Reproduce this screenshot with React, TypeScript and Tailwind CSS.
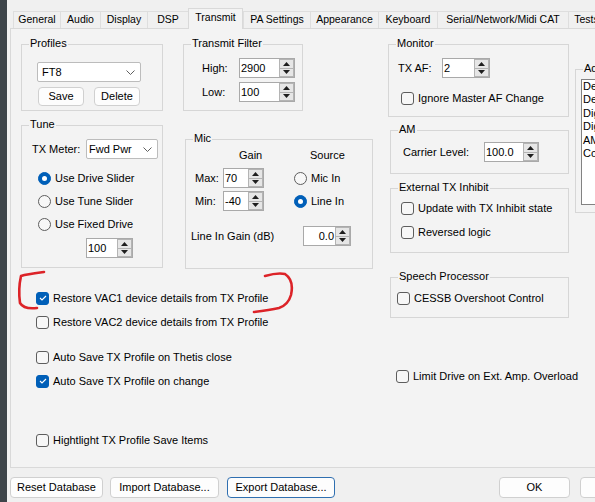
import React from 'react';

type Kids = { children?: React.ReactNode; className?: string };

const TABS: Array<{ label: string; w: string; active?: boolean }> = [
  { label: 'General', w: 'w-[47px]' },
  { label: 'Audio', w: 'w-[40px]' },
  { label: 'Display', w: 'w-[47px]' },
  { label: 'DSP', w: 'w-[41px]' },
  { label: 'Transmit', w: 'w-[55px]', active: true },
  { label: 'PA Settings', w: 'w-[67px]' },
  { label: 'Appearance', w: 'w-[68px]' },
  { label: 'Keyboard', w: 'w-[59px]' },
  { label: 'Serial/Network/Midi CAT', w: 'w-[131px]' },
  { label: 'Tests', w: 'w-[36px]' },
];

const PROFILES = ['Default', 'Default DX', 'Digi 1K@1500', 'Digi 1K@2210', 'AM', 'Conventional'];

function Arrow({ up }: { up?: boolean }) {
  return (
    <svg width="7" height="4" viewBox="0 0 7 4">
      <path d={up ? 'M0 4L3.5 0L7 4Z' : 'M0 0L3.5 4L7 0Z'} fill="#1e1e1e" />
    </svg>
  );
}

function Spin({ value, className = '', right }: { value: string; className?: string; right?: boolean }) {
  return (
    <div className={`flex h-[20px] shrink-0 border border-[#a9a9a9] bg-white ${className}`}>
      <div className={`flex-1 leading-[18px] ${right ? 'pr-[1px] text-right' : 'pl-[1px]'}`}>{value}</div>
      <div className="flex w-[15px] flex-col">
        <div className="flex flex-1 items-center justify-center border border-[#b4b4b4] bg-[#e6e6e6]">
          <Arrow up />
        </div>
        <div className="flex flex-1 items-center justify-center border border-t-0 border-[#b4b4b4] bg-[#e6e6e6]">
          <Arrow />
        </div>
      </div>
    </div>
  );
}

function Combo({ value, className = '' }: { value: string; className?: string }) {
  return (
    <div className={`flex h-[20px] shrink-0 items-center justify-between rounded-[2px] border border-[#bcbcbc] bg-white pr-[5px] ${className}`}>
      <span>{value}</span>
      <svg width="9" height="5" viewBox="0 0 9 5">
        <path d="M0.5 0.5L4.5 4.5L8.5 0.5" fill="none" stroke="#5f5f5f" strokeWidth="1" />
      </svg>
    </div>
  );
}

function Btn({ label, className = '' }: { label: string; className?: string }) {
  return (
    <div className={`flex shrink-0 items-center justify-center rounded-[4px] border bg-[#fdfdfd] ${className}`}>
      {label}
    </div>
  );
}

function Check({ label, checked }: { label: string; checked?: boolean }) {
  return (
    <div className="flex h-[16px] items-center gap-[4px]">
      <span
        className={`flex h-[13px] w-[13px] shrink-0 items-center justify-center rounded-[3px] border ${
          checked ? 'border-[#005fb8] bg-[#005fb8]' : 'border-[#5d5d5d] bg-[#f7f7f7]'
        }`}
      >
        {checked && (
          <svg width="8" height="6" viewBox="0 0 8 6">
            <path d="M1 3L3 5L7 1" fill="none" stroke="#fff" strokeWidth="1.1" />
          </svg>
        )}
      </span>
      <span className="whitespace-nowrap">{label}</span>
    </div>
  );
}

function Radio({ label, checked }: { label: string; checked?: boolean }) {
  return (
    <div className="flex h-[16px] items-center gap-[4px]">
      <span
        className={`flex h-[13px] w-[13px] shrink-0 items-center justify-center rounded-full border ${
          checked ? 'border-[#005fb8] bg-[#005fb8]' : 'border-[#5d5d5d] bg-[#f7f7f7]'
        }`}
      >
        {checked && <span className="h-[5px] w-[5px] rounded-full bg-white" />}
      </span>
      <span className="whitespace-nowrap">{label}</span>
    </div>
  );
}

function Group({ title, className = '', children }: Kids & { title: string }) {
  return (
    <div className={`relative shrink-0 border border-[#d6d6d6] ${className}`}>
      <span className="absolute -top-[8px] left-[7px] whitespace-nowrap bg-[#f3f3f3] px-[1px] leading-[13px]">
        {title}
      </span>
      {children}
    </div>
  );
}

function Annotation() {
  return (
    <svg className="pointer-events-none absolute left-0 top-0" width="595" height="502" viewBox="0 0 595 502">
      <g fill="none" stroke="#dc2328" strokeWidth="2.6" strokeLinecap="round" strokeLinejoin="round">
        <path d="M44 272C36 273 27 274 21 276C19 285 19 296 20 303C23 308 29 309 37 308" />
        <path d="M265 276C272 274 280 273 285 274C291 278 293 286 291 295C289 302 285 306 279 308C270 310 262 311 254 312" />
      </g>
    </svg>
  );
}

export default function App() {
  return (
    <div className="relative flex h-[502px] w-[595px] overflow-hidden bg-[#f0f0f0] font-['Liberation_Sans',Arial,sans-serif] text-[11px] text-black">
      {/* window edge behind the dialog */}
      <div className="h-full w-[7px] shrink-0 bg-[#3d4449]" />

      <div className="flex flex-col">
        {/* tab strip */}
        <div className="ml-[6px] mt-[8px] flex h-[20px] items-end text-[10.5px]">
          {TABS.map(t =>
            t.active ? (
              <div
                key={t.label}
                className={`relative z-10 -mb-px flex h-[21px] shrink-0 items-center justify-center border-x border-t border-[#d9d9d9] bg-[#f3f3f3] pb-[3px] ${t.w}`}
              >
                {t.label}
              </div>
            ) : (
              <div
                key={t.label}
                className={`flex h-[17px] shrink-0 items-center justify-center border-l border-t border-[#dedede] bg-[#f0f0f0] ${t.w}`}
              >
                {t.label}
              </div>
            ),
          )}
        </div>

        {/* tab page */}
        <div className="ml-[3px] flex h-[440px] w-[600px] items-start border-y border-l border-[#d9d9d9] bg-[#f3f3f3]">
          {/* left section */}
          <div className="ml-[10px] flex w-[352px] shrink-0 flex-col">
            <div className="flex items-start">
              <div className="mt-[15px] flex w-[142px] shrink-0 flex-col">
                <Group title="Profiles" className="h-[67px] w-[142px]">
                  <Combo value="FT8" className="ml-[15px] mt-[17px] w-[104px] pl-[4px]" />
                  <div className="ml-[16px] mt-[5px] flex gap-[10px]">
                    <Btn label="Save" className="h-[19px] w-[46px] border-[#d0d0d0]" />
                    <Btn label="Delete" className="h-[19px] w-[46px] border-[#d0d0d0]" />
                  </div>
                </Group>

                <Group title="Tune" className="mt-[14px] h-[143px] w-[142px]">
                  <div className="ml-[10px] mt-[13px] flex items-center">
                    <span className="w-[54px] shrink-0">TX Meter:</span>
                    <Combo value="Fwd Pwr" className="w-[72px] pl-[2px]" />
                  </div>
                  <div className="ml-[16px] mt-[11px] flex flex-col gap-[7px]">
                    <Radio label="Use Drive Slider" checked />
                    <Radio label="Use Tune Slider" />
                    <Radio label="Use Fixed Drive" />
                  </div>
                  <Spin value="100" className="ml-[64px] mt-[6px] w-[47px]" />
                </Group>
              </div>

              <div className="ml-[20px] mt-[15px] flex w-[190px] shrink-0 flex-col">
                <Group title="Transmit Filter" className="h-[67px] w-[120px]">
                  <div className="ml-[18px] mt-[13px] flex items-center">
                    <span className="w-[37px] shrink-0">High:</span>
                    <Spin value="2900" className="w-[56px]" />
                  </div>
                  <div className="ml-[18px] mt-[4px] flex items-center">
                    <span className="w-[37px] shrink-0">Low:</span>
                    <Spin value="100" className="w-[56px]" />
                  </div>
                </Group>

                <Group title="Mic" className="ml-[2px] mt-[28px] h-[130px] w-[188px]">
                  <div className="ml-[53px] mt-[9px] flex h-[13px] items-center">
                    <span className="w-[71px] shrink-0">Gain</span>
                    <span>Source</span>
                  </div>
                  <div className="ml-[9px] mt-[6px] flex items-center">
                    <span className="w-[28px] shrink-0">Max:</span>
                    <Spin value="70" className="w-[41px]" />
                    <div className="ml-[30px]">
                      <Radio label="Mic In" />
                    </div>
                  </div>
                  <div className="ml-[9px] mt-[3px] flex items-center">
                    <span className="w-[28px] shrink-0">Min:</span>
                    <Spin value="-40" className="w-[41px]" />
                    <div className="ml-[30px]">
                      <Radio label="Line In" checked />
                    </div>
                  </div>
                  <div className="ml-[5px] mt-[15px] flex items-center">
                    <span className="w-[112px] shrink-0">Line In Gain (dB)</span>
                    <Spin value="0.0" right className="w-[48px]" />
                  </div>
                </Group>
              </div>
            </div>

            <div className="ml-[15px] flex flex-col">
              <div className="mt-[21px]">
                <Check label="Restore VAC1 device details from TX Profile" checked />
              </div>
              <div className="mt-[8px]">
                <Check label="Restore VAC2 device details from TX Profile" />
              </div>
              <div className="mt-[19px]">
                <Check label="Auto Save TX Profile on Thetis close" />
              </div>
              <div className="mt-[8px]">
                <Check label="Auto Save TX Profile on change" checked />
              </div>
              <div className="mt-[43px]">
                <Check label="Hightlight TX Profile Save Items" />
              </div>
            </div>
          </div>

          {/* right column */}
          <div className="ml-[15px] mt-[15px] flex w-[181px] shrink-0 flex-col">
            <Group title="Monitor" className="h-[73px] w-[181px]">
              <div className="ml-[9px] mt-[13px] flex items-center">
                <span className="w-[44px] shrink-0">TX AF:</span>
                <Spin value="2" className="w-[48px]" />
              </div>
              <div className="ml-[12px] mt-[12px]">
                <Check label="Ignore Master AF Change" />
              </div>
            </Group>

            <Group title="AM" className="ml-[2px] mt-[13px] h-[44px] w-[179px]">
              <div className="ml-[12px] mt-[11px] flex items-center">
                <span className="w-[81px] shrink-0">Carrier Level:</span>
                <Spin value="100.0" className="w-[55px]" />
              </div>
            </Group>

            <Group title="External TX Inhibit" className="ml-[2px] mt-[14px] h-[65px] w-[179px]">
              <div className="ml-[10px] mt-[11px] flex flex-col gap-[8px]">
                <Check label="Update with TX Inhibit state" />
                <Check label="Reversed logic" />
              </div>
            </Group>

            <Group title="Speech Processor" className="ml-[2px] mt-[24px] h-[41px] w-[179px]">
              <div className="ml-[6px] mt-[12px]">
                <Check label="CESSB Overshoot Control" />
              </div>
            </Group>

            <div className="ml-[8px] mt-[50px]">
              <Check label="Limit Drive on Ext. Amp. Overload" />
            </div>
          </div>

          {/* profile list, cut off by the window edge */}
          <Group title="Advanced" className="ml-[6px] mt-[40px] h-[144px] w-[200px]">
            <div className="ml-[5px] mt-[9px] h-[126px] w-[180px] border border-[#828282] bg-white pl-[1px]">
              {PROFILES.map(p => (
                <div key={p} className="whitespace-nowrap leading-[13.4px]">
                  {p}
                </div>
              ))}
            </div>
          </Group>
        </div>

        {/* dialog buttons */}
        <div className="ml-[3px] mt-[9px] flex">
          <Btn label="Reset Database" className="h-[21px] w-[93px] border-[#d0d0d0]" />
          <Btn label="Import Database..." className="ml-[7px] h-[21px] w-[109px] border-[#d0d0d0]" />
          <Btn label="Export Database..." className="ml-[8px] h-[21px] w-[108px] border-[#2f6fb0]" />
          <Btn label="OK" className="ml-[164px] h-[21px] w-[71px] border-[#d0d0d0]" />
          <Btn label="Cancel" className="ml-[10px] h-[21px] w-[71px] border-[#d0d0d0]" />
        </div>
      </div>

      <Annotation />
    </div>
  );
}
